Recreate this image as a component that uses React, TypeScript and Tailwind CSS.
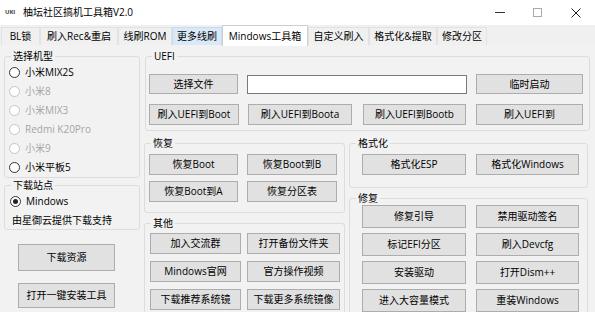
import React from "react"

function Btn({ className, children }: { className: string; children: React.ReactNode }) {
  return (
    <div className={`flex shrink-0 items-center justify-center border border-[#adadad] bg-[#e1e1e1] text-black ${className}`}>
      {children}
    </div>
  )
}

function Group({ title, className, children }: { title: string; className: string; children: React.ReactNode }) {
  return (
    <fieldset className={`min-w-0 rounded-[3px] border border-[#dcdcdc] ${className}`}>
      <legend className="ml-[6px] px-[2px] leading-[13px]">{title}</legend>
      {children}
    </fieldset>
  )
}

function Radio({ label, disabled, checked }: { label: string; disabled?: boolean; checked?: boolean }) {
  return (
    <div className="flex h-[19px] items-center">
      <span
        className={`flex h-[11px] w-[11px] items-center justify-center rounded-full border bg-white ${
          disabled ? "border-[#c4c4c4]" : "border-[#333333]"
        }`}
      >
        {checked && <span className="h-[5px] w-[5px] rounded-full bg-[#222222]" />}
      </span>
      <span className={`ml-[5px] ${disabled ? "text-[#a6a6a6]" : "text-black"}`}>{label}</span>
    </div>
  )
}

const tabs = [
  { name: "BL锁", w: "w-[39px]" },
  { name: "刷入Rec&重启", w: "w-[78px]" },
  { name: "线刷ROM", w: "w-[54px]" },
  { name: "更多线刷", w: "w-[50px]", hover: true },
  { name: "Mindows工具箱", w: "w-[86px]", active: true },
  { name: "自定义刷入", w: "w-[61px]" },
  { name: "格式化&提取", w: "w-[68px]" },
  { name: "修改分区", w: "w-[50px]" },
]

export default function App() {
  return (
    <div className="flex h-[312px] w-[595px] flex-col overflow-hidden bg-[#f2f2f2] font-['Open_Sans','Noto_Sans_CJK_SC',sans-serif] text-[10px] leading-[13px] text-black">
      {/* title bar */}
      <div className="flex h-[25px] shrink-0 items-center bg-white">
        <span className="ml-[5px] text-[6px] font-bold tracking-tight text-[#444]">UKI</span>
        <span className="ml-[8px] text-[10px]">柚坛社区搞机工具箱V2.0</span>
        <div className="ml-auto flex items-center">
          <span className="h-px w-[10px] bg-[#333]" />
          <span className="ml-[28px] h-[9px] w-[9px] border border-[#aaaaaa]" />
          <svg className="ml-[29px] mr-[14px]" width="10" height="10" viewBox="0 0 10 10">
            <path d="M0.5 0.5 L9.5 9.5 M9.5 0.5 L0.5 9.5" stroke="#222" strokeWidth="1" />
          </svg>
        </div>
      </div>

      {/* tab strip */}
      <div className="relative z-10 flex h-[20px] shrink-0 items-end bg-[#f0f0f0] pl-[1px]">
        {tabs.map((t) => (
          <div
            key={t.name}
            className={`flex shrink-0 items-center justify-center border border-b-0 ${t.w} ${
              t.active
                ? "-mb-px h-[21px] border-[#cfcfcf] bg-white"
                : t.hover
                  ? "h-[18px] border-[#c5dcef] bg-[#d9e9f7]"
                  : "h-[18px] border-[#e2e2e2] bg-[#f0f0f0]"
            }`}
          >
            {t.name}
          </div>
        ))}
      </div>

      {/* content */}
      <div className="flex h-[267px] shrink-0">
        {/* left column */}
        <div className="w-[142px] shrink-0 pl-[4px]">
          <Group title="选择机型" className="mt-[5px] w-[136px]">
            <div className="pl-[4px]">
              <Radio label="小米MIX2S" />
              <Radio label="小米8" disabled />
              <Radio label="小米MIX3" disabled />
              <Radio label="Redmi K20Pro" disabled />
              <Radio label="小米9" disabled />
              <Radio label="小米平板5" />
            </div>
          </Group>
          <Group title="下载站点" className="mt-[1px] w-[136px]">
            <div className="pl-[5px]">
              <Radio label="Mindows" checked />
            </div>
            <div className="flex h-[18px] items-center pl-[7px]">由星御云提供下载支持</div>
          </Group>
          <Btn className="ml-[14px] mt-[14px] h-[27px] w-[97px]">下载资源</Btn>
          <Btn className="ml-[14px] mt-[12px] h-[25px] w-[97px]">打开一键安装工具</Btn>
        </div>

        {/* right column */}
        <div className="flex-1">
          <Group title="UEFI" className="ml-[3px] mt-[5px] w-[445px]">
            <div className="pb-[5px] pl-[3px] pt-[11px]">
              <div className="flex h-[20px] items-center">
                <Btn className="h-[20px] w-[89px]">选择文件</Btn>
                <div className="ml-[9px] h-[19px] w-[220px] border border-[#7a7a7a] bg-white" />
                <Btn className="ml-[9px] h-[20px] w-[107px]">临时启动</Btn>
              </div>
              <div className="mt-[10px] flex">
                <Btn className="h-[21px] w-[90px]">刷入UEFI到Boot</Btn>
                <Btn className="ml-[9px] h-[21px] w-[104px]">刷入UEFI到Boota</Btn>
                <Btn className="ml-[11px] h-[21px] w-[103px]">刷入UEFI到Bootb</Btn>
                <Btn className="ml-[10px] h-[21px] w-[107px]">刷入UEFI到</Btn>
              </div>
            </div>
          </Group>

          <div className="flex">
            <div className="w-[207px] shrink-0 pl-[2px]">
              <Group title="恢复" className="mt-[6px] w-[201px]">
                <div className="grid grid-cols-[89px_90px] gap-x-[9px] gap-y-[6px] pb-[10px] pl-[4px] pt-[4px]">
                  <Btn className="h-[21px]">恢复Boot</Btn>
                  <Btn className="h-[21px]">恢复Boot到B</Btn>
                  <Btn className="h-[21px]">恢复Boot到A</Btn>
                  <Btn className="h-[21px]">恢复分区表</Btn>
                </div>
              </Group>
              <Group title="其他" className="mt-[4px] h-[120px] w-[201px]">
                <div className="grid grid-cols-[91px_93px] gap-x-[6px] gap-y-[7px] pl-[5px] pt-[3px]">
                  <Btn className="h-[21px]">加入交流群</Btn>
                  <Btn className="h-[21px]">打开备份文件夹</Btn>
                  <Btn className="h-[21px]">Mindows官网</Btn>
                  <Btn className="h-[21px]">官方操作视频</Btn>
                  <Btn className="h-[21px]">下载推荐系统镜</Btn>
                  <Btn className="h-[21px]">下载更多系统镜像</Btn>
                </div>
              </Group>
            </div>
            <div className="w-[239px] shrink-0">
              <Group title="格式化" className="mt-[6px] w-[239px]">
                <div className="flex pb-[12px] pl-[12px] pt-[4px]">
                  <Btn className="h-[21px] w-[104px]">格式化ESP</Btn>
                  <Btn className="ml-[10px] h-[21px] w-[103px]">格式化Windows</Btn>
                </div>
              </Group>
              <Group title="修复" className="mt-[4px] h-[140px] w-[239px]">
                <div className="grid grid-cols-[104px_103px] gap-x-[10px] gap-y-[5px] pl-[12px]">
                  <Btn className="h-[23px]">修复引导</Btn>
                  <Btn className="h-[23px]">禁用驱动签名</Btn>
                  <Btn className="h-[23px]">标记EFI分区</Btn>
                  <Btn className="h-[23px]">刷入Devcfg</Btn>
                  <Btn className="h-[23px]">安装驱动</Btn>
                  <Btn className="h-[23px]">打开Dism++</Btn>
                  <Btn className="h-[23px]">进入大容量模式</Btn>
                  <Btn className="h-[23px]">重装Windows</Btn>
                </div>
              </Group>
            </div>
          </div>
        </div>
      </div>
    </div>
  )
}
